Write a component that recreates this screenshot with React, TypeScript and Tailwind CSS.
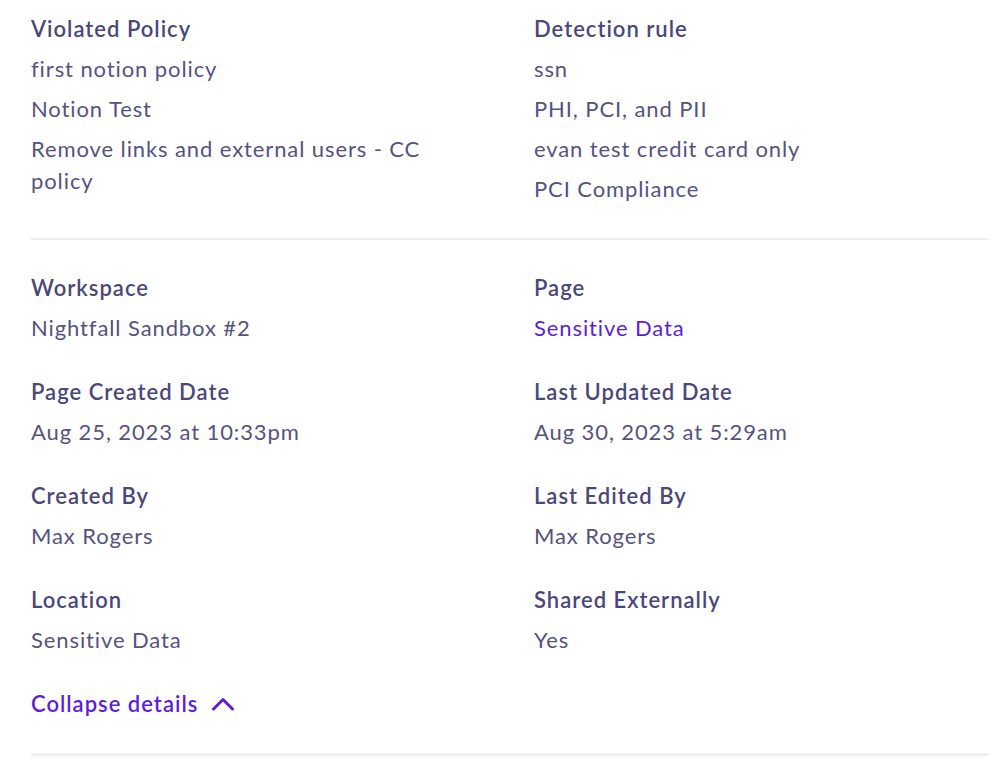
import React from 'react';

type Field = { label: string; values: string[]; link?: boolean };

const policies: Field = {
  label: 'Violated Policy',
  values: ['first notion policy', 'Notion Test', 'Remove links and external users - CC policy'],
};

const rules: Field = {
  label: 'Detection rule',
  values: ['ssn', 'PHI, PCI, and PII', 'evan test credit card only', 'PCI Compliance'],
};

const details: Field[] = [
  { label: 'Workspace', values: ['Nightfall Sandbox #2'] },
  { label: 'Page', values: ['Sensitive Data'], link: true },
  { label: 'Page Created Date', values: ['Aug 25, 2023 at 10:33pm'] },
  { label: 'Last Updated Date', values: ['Aug 30, 2023 at 5:29am'] },
  { label: 'Created By', values: ['Max Rogers'] },
  { label: 'Last Edited By', values: ['Max Rogers'] },
  { label: 'Location', values: ['Sensitive Data'] },
  { label: 'Shared Externally', values: ['Yes'] },
];

const FieldBlock: React.FC<{ field: Field }> = ({ field }) => (
  <div className="flex flex-col gap-2">
    <div className="font-semibold tracking-[1px] text-[#4a4878]">{field.label}</div>
    {field.values.map((v) => (
      <div key={v} className={field.link ? 'text-[#5b1fdb]' : 'text-[#55537f]'}>
        {v}
      </div>
    ))}
  </div>
);

export default function App() {
  return (
    <div
      className="min-h-[758px] bg-white pl-[31px] pr-[10px] pt-[13px] text-[22px] leading-[32px] tracking-[0.9px]"
      style={{ fontFamily: 'Lato, "Open Sans", sans-serif' }}
    >
      <div className="grid grid-cols-2 gap-x-12 pb-[33px]">
        <div className="pr-8">
          <FieldBlock field={policies} />
        </div>
        <FieldBlock field={rules} />
      </div>
      <div className="h-[2px] bg-[#ececf2]" />
      <div className="grid grid-cols-2 gap-x-12 gap-y-8 pt-[32px]">
        {details.map((f) => (
          <FieldBlock key={f.label} field={f} />
        ))}
      </div>
      <button className="mt-8 flex items-center gap-[13px] font-semibold tracking-[1px] text-[#5b1fdb]">
        Collapse details
        <svg width="24" height="14" viewBox="0 0 24 14" fill="none">
          <polyline
            points="2.5,12 12,2.5 21.5,12"
            stroke="currentColor"
            strokeWidth="3"
            strokeLinecap="round"
            strokeLinejoin="round"
          />
        </svg>
      </button>
      <div className="mt-[33px] h-[3px] bg-[#efeff4]" />
    </div>
  );
}
